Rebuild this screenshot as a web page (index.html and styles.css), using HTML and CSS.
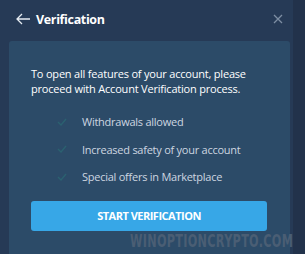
FILE: index.html
```html
<!DOCTYPE html>
<html>
<head>
<meta charset="utf-8">
<link rel="stylesheet" href="styles.css">
</head>
<body>
<div class="screen">
  <div class="panel">
    <div class="header">
      <svg class="back" width="15" height="12" viewBox="0 0 15 12"><path d="M6 1 L1 6 L6 11 M1 6 H14" fill="none" stroke="#e6ecf2" stroke-width="1.3"/></svg>
      <span class="title">Verification</span>
      <svg class="close" width="10" height="10" viewBox="0 0 10 10"><path d="M1 1 L9 9 M9 1 L1 9" fill="none" stroke="#7d8ea3" stroke-width="1.3"/></svg>
    </div>
    <div class="card">
      <p class="intro">To open all features of your account, please proceed with Account Verification process.</p>
      <ul class="list">
        <li><svg class="check" width="10" height="8" viewBox="0 0 10 8"><path d="M1 4 L4 7 L9 1" fill="none" stroke="#2b6170" stroke-width="1.4"/></svg>Withdrawals allowed</li>
        <li><svg class="check" width="10" height="8" viewBox="0 0 10 8"><path d="M1 4 L4 7 L9 1" fill="none" stroke="#2b6170" stroke-width="1.4"/></svg>Increased safety of your account</li>
        <li><svg class="check" width="10" height="8" viewBox="0 0 10 8"><path d="M1 4 L4 7 L9 1" fill="none" stroke="#2b6170" stroke-width="1.4"/></svg>Special offers in Marketplace</li>
      </ul>
      <button class="btn">START VERIFICATION</button>
    </div>
  </div>
  <div class="strip"></div>
  <div class="watermark">WINOPTIONCRYPTO.COM</div>
</div>
</body>
</html>
```
FILE: styles.css
```css
html, body { margin: 0; padding: 0; }
body { width: 305px; height: 254px; overflow: hidden; background: #263a56; font-family: "Open Sans", "Noto Sans", sans-serif; }
.screen { position: relative; display: flex; width: 305px; height: 254px; }
.panel { width: 293px; display: flex; flex-direction: column; background: #263a56; }
.strip { flex: 1; background: #22324b; }
.header { height: 41px; display: flex; align-items: center; padding: 0 0 0 16px; box-sizing: border-box; }
.back { margin-right: 5px; margin-top: -3px; }
.title { color: #ffffff; font-weight: 700; font-size: 12.5px; letter-spacing: -0.35px; flex: 1; margin-top: -3px; }
.close { margin-right: 10px; margin-top: -4px; }
.card { margin-left: 9px; width: 281px; flex: 1; background: #2c4b68; border-radius: 3px 3px 0 0; padding: 25px 22px 0 22px; box-sizing: border-box; }
.intro { margin: 0; color: #ffffff; font-size: 11px; line-height: 15px; letter-spacing: -0.2px; }
.list { list-style: none; margin: 12px 0 0 0; padding: 0 0 0 26px; }
.list li { height: 27.5px; display: flex; align-items: center; color: #cdd6e0; font-size: 11px; letter-spacing: -0.25px; }
.check { margin-right: 15px; }
.btn { margin-top: 10px; width: 236px; height: 30px; border: 0; border-radius: 3px; background: #37a7e7; color: #ffffff; font-family: "Open Sans", "Noto Sans", sans-serif; font-weight: 700; font-size: 11px; letter-spacing: -0.5px; padding: 0; }
.watermark { position: absolute; left: 130px; top: 231px; color: #4a5e74; font-family: "DejaVu Sans Condensed", "Liberation Sans", sans-serif; font-weight: 700; font-size: 12.5px; letter-spacing: 0.3px; transform: scaleY(1.35); transform-origin: top left; }
```
